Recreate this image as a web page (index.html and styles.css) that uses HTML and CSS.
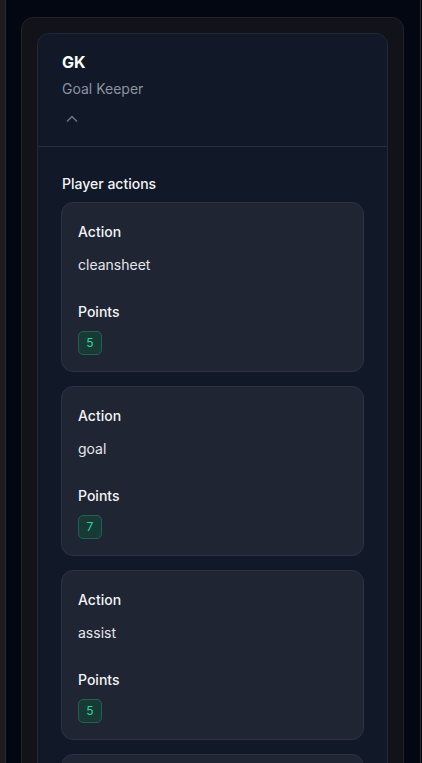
FILE: index.html
```html
<!DOCTYPE html>
<html lang="en">
<head>
<meta charset="utf-8">
<link rel="stylesheet" href="styles.css">
</head>
<body>
<div class="app">
  <aside class="sidebar"></aside>
  <main class="main">
    <section class="panel">
      <article class="card">
        <header class="card-head">
          <h2 class="pos">GK</h2>
          <p class="pos-name">Goal Keeper</p>
          <button class="toggle" aria-label="Collapse">
            <svg width="16" height="16" viewBox="0 0 16 16" fill="none"><path d="M3.5 10L8 5.5L12.5 10" stroke="#6b7280" stroke-width="1.6" stroke-linecap="round" stroke-linejoin="round"/></svg>
          </button>
        </header>
        <div class="card-body">
          <h3 class="section-title">Player actions</h3>
          <ul class="actions">
            <li class="action">
              <div class="label">Action</div>
              <div class="value">cleansheet</div>
              <div class="label label-gap">Points</div>
              <span class="badge">5</span>
            </li>
            <li class="action">
              <div class="label">Action</div>
              <div class="value">goal</div>
              <div class="label label-gap">Points</div>
              <span class="badge">7</span>
            </li>
            <li class="action">
              <div class="label">Action</div>
              <div class="value">assist</div>
              <div class="label label-gap">Points</div>
              <span class="badge">5</span>
            </li>
            <li class="action">
              <div class="label">Action</div>
              <div class="value">save</div>
              <div class="label label-gap">Points</div>
              <span class="badge">1</span>
            </li>
          </ul>
        </div>
      </article>
    </section>
  </main>
  <div class="scrollbar"></div>
</div>
</body>
</html>
```

FILE: styles.css
```css
* { box-sizing: border-box; }
html, body { margin: 0; padding: 0; height: 100%; }
body {
  background: #030712;
  font-family: Inter, "Noto Sans", sans-serif;
  color: #f3f4f6;
  overflow: hidden;
}
.app {
  display: flex;
  height: 763px;
  overflow: hidden;
}
.sidebar {
  width: 6px;
  flex: none;
  background: #1c1c1f;
  border-right: 1px solid #2b2b2f;
}
.main {
  flex: 1;
  padding: 17px 16px 0 15px;
  min-width: 0;
}
.scrollbar {
  width: 2px;
  flex: none;
  border-left: 1px solid #2a2c31;
  background: #030712;
}
.panel {
  background: #111318;
  border: 1px solid #1f2228;
  border-radius: 12px;
  padding: 15px;
}
.card {
  background: #111827;
  border: 1px solid #1f2937;
  border-radius: 12px;
}
.card-head {
  padding: 16px 24px 16px;
  border-bottom: 1px solid #263040;
}
.pos {
  margin: 0;
  font-size: 16px;
  line-height: 24px;
  font-weight: 700;
  color: #ffffff;
}
.pos-name {
  margin: 5px 0 0;
  font-size: 14px;
  line-height: 20px;
  color: #8b93a1;
}
.toggle {
  margin-top: 10px;
  display: block;
  width: 20px;
  height: 20px;
  padding: 2px;
  background: none;
  border: 0;
}
.toggle svg { display: block; }
.card-head .toggle { margin-bottom: 1px; }
.card-body {
  padding: 27px 24px 24px;
}
.section-title {
  margin: 0;
  font-size: 14px;
  line-height: 20px;
  font-weight: 500;
  color: #f3f4f6;
}
.actions {
  list-style: none;
  margin: 8px -1px 0;
  padding: 0;
  display: flex;
  flex-direction: column;
  gap: 14px;
}
.action {
  background: #1f2533;
  border: 1px solid #2b3241;
  border-radius: 12px;
  padding: 19px 16px 16px;
}
.label {
  font-size: 14px;
  line-height: 20px;
  font-weight: 500;
  color: #f3f4f6;
}
.label-gap { margin-top: 27px; }
.value {
  margin-top: 13px;
  font-size: 14px;
  line-height: 20px;
  color: #e5e7eb;
}
.badge {
  margin-top: 9px;
  display: flex;
  align-items: center;
  justify-content: center;
  width: 24px;
  height: 24px;
  border: 1px solid #23614f;
  background: #183a36;
  border-radius: 5px;
  color: #34d399;
  font-size: 12px;
  line-height: 16px;
}
```
